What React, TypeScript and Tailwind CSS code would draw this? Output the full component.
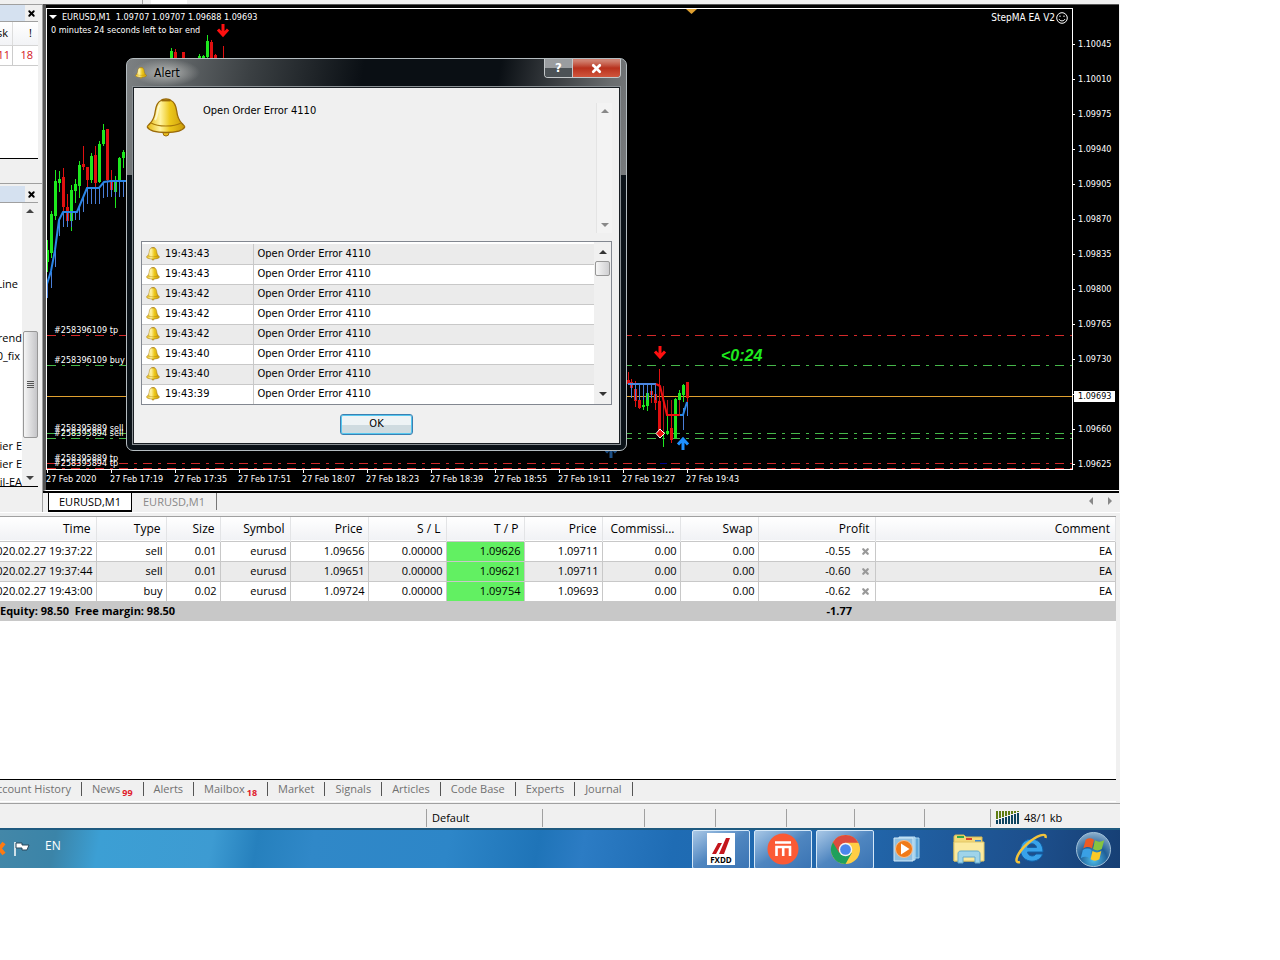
import { ReactNode } from "react";
import { X } from "lucide-react";

type Candle = {
  x: number;
  high: number;
  low: number;
  top: number;
  bottom: number;
  up?: boolean;
};

const candles: Candle[] = [
  { x: 47, high: 240, low: 272, top: 250, bottom: 262, up: true },
  { x: 51, high: 211, low: 258, top: 214, bottom: 253, up: true },
  { x: 55, high: 170, low: 220, top: 181, bottom: 216, up: true },
  { x: 59, high: 171, low: 192, top: 179, bottom: 183, up: true },
  { x: 63, high: 168, low: 212, top: 177, bottom: 207 },
  { x: 67, high: 194, low: 222, top: 207, bottom: 221 },
  { x: 71, high: 185, low: 231, top: 190, bottom: 221, up: true },
  { x: 75, high: 179, low: 203, top: 184, bottom: 191, up: true },
  { x: 79, high: 161, low: 198, top: 165, bottom: 186, up: true },
  { x: 83, high: 146, low: 170, top: 164, bottom: 167 },
  { x: 87, high: 167, low: 190, top: 167, bottom: 180 },
  { x: 91, high: 153, low: 183, top: 156, bottom: 180, up: true },
  { x: 95, high: 146, low: 187, top: 155, bottom: 183 },
  { x: 99, high: 141, low: 183, top: 144, bottom: 182, up: true },
  { x: 103, high: 124, low: 146, top: 130, bottom: 144, up: true },
  { x: 107, high: 129, low: 182, top: 129, bottom: 180 },
  { x: 111, high: 170, low: 192, top: 181, bottom: 190 },
  { x: 115, high: 176, low: 208, top: 181, bottom: 192, up: true },
  { x: 119, high: 157, low: 182, top: 158, bottom: 181, up: true },
  { x: 123, high: 150, low: 168, top: 152, bottom: 158, up: true },
  { x: 171, high: 48, low: 66, top: 51, bottom: 64, up: true },
  { x: 175, high: 49, low: 66, top: 52, bottom: 64 },
  { x: 183, high: 52, low: 66, top: 52, bottom: 64 },
  { x: 199, high: 54, low: 66, top: 56, bottom: 64, up: true },
  { x: 203, high: 55, low: 66, top: 56, bottom: 64, up: true },
  { x: 207, high: 35, low: 66, top: 41, bottom: 57, up: true },
  { x: 211, high: 40, low: 66, top: 42, bottom: 58 },
  { x: 215, high: 54, low: 66, top: 55, bottom: 64 },
  { x: 223, high: 46, low: 66, top: 60, bottom: 64 },
  { x: 628, high: 372, low: 384, top: 380, bottom: 384 },
  { x: 631, high: 379, low: 398, top: 382, bottom: 388 },
  { x: 635, high: 381, low: 407, top: 389, bottom: 401 },
  { x: 639, high: 386, low: 409, top: 400, bottom: 408 },
  { x: 643, high: 396, low: 410, top: 405, bottom: 407, up: true },
  { x: 647, high: 390, low: 411, top: 393, bottom: 406, up: true },
  { x: 651, high: 387, low: 403, top: 391, bottom: 395 },
  { x: 655, high: 393, low: 410, top: 394, bottom: 403 },
  { x: 659, high: 369, low: 432, top: 401, bottom: 431 },
  { x: 663, high: 432, low: 447, top: 432, bottom: 434, up: true },
  { x: 667, high: 415, low: 435, top: 431, bottom: 434, up: true },
  { x: 671, high: 400, low: 443, top: 428, bottom: 440 },
  { x: 675, high: 398, low: 439, top: 399, bottom: 438, up: true },
  { x: 679, high: 390, low: 402, top: 393, bottom: 400, up: true },
  { x: 683, high: 384, low: 402, top: 385, bottom: 395, up: true },
  { x: 687, high: 382, low: 404, top: 382, bottom: 398 },
];

// thin blue / red histogram bars hanging off the moving average: [x, from, to]
const blueBars = [
  [47, 283, 298], [51, 272, 288], [55, 250, 267], [59, 220, 236], [63, 212, 227],
  [67, 211, 227], [71, 211, 227], [75, 211, 220], [79, 205, 220], [83, 196, 212],
  [87, 188, 204], [91, 188, 204], [95, 188, 204], [99, 187, 204], [103, 183, 198],
  [107, 181, 197], [111, 181, 197], [115, 181, 197], [119, 181, 197], [123, 181, 197],
  [631, 384, 398], [635, 384, 400], [639, 384, 400], [643, 384, 400], [647, 384, 400],
  [651, 384, 398], [655, 384, 400], [683, 408, 430], [687, 402, 416],
];
const redBars = [
  [663, 386, 432], [667, 400, 416], [671, 400, 416], [679, 400, 416],
];

const orderLines = [
  { y: 335, color: "#d42a2a" },
  { y: 365, color: "#46b84a" },
  { y: 433, color: "#46b84a" },
  { y: 438, color: "#46b84a" },
  { y: 463, color: "#d42a2a" },
  { y: 468, color: "#d42a2a" },
];

const orderLabels = [
  { y: 333, text: "#258396109 tp" },
  { y: 363, text: "#258396109 buy" },
  { y: 431, text: "#258395889 sell" },
  { y: 436, text: "#258395894 sell" },
  { y: 461, text: "#258395889 tp" },
  { y: 466, text: "#258395894 tp" },
];

const prices = [
  "1.10045", "1.10010", "1.09975", "1.09940", "1.09905", "1.09870", "1.09835",
  "1.09800", "1.09765", "1.09730", "", "1.09660", "1.09625",
];

const times = [
  "27 Feb 2020", "27 Feb 17:19", "27 Feb 17:35", "27 Feb 17:51", "27 Feb 18:07",
  "27 Feb 18:23", "27 Feb 18:39", "27 Feb 18:55", "27 Feb 19:11", "27 Feb 19:27", "27 Feb 19:43",
];

const alerts = [
  "19:43:43", "19:43:43", "19:43:42", "19:43:42", "19:43:42", "19:43:40", "19:43:40", "19:43:39",
];

const columns = [
  { name: "Time", width: "w-[96px]" },
  { name: "Type", width: "w-[70px]" },
  { name: "Size", width: "w-[54px]" },
  { name: "Symbol", width: "w-[70px]" },
  { name: "Price", width: "w-[78px]" },
  { name: "S / L", width: "w-[78px]" },
  { name: "T / P", width: "w-[78px]" },
  { name: "Price", width: "w-[78px]" },
  { name: "Commissi...", width: "w-[78px]" },
  { name: "Swap", width: "w-[78px]" },
  { name: "Profit", width: "w-[117px]" },
  { name: "Comment", width: "" },
];

const orders = [
  ["2020.02.27 19:37:22", "sell", "0.01", "eurusd", "1.09656", "0.00000", "1.09626", "1.09711", "0.00", "0.00", "-0.55", "EA"],
  ["2020.02.27 19:37:44", "sell", "0.01", "eurusd", "1.09651", "0.00000", "1.09621", "1.09711", "0.00", "0.00", "-0.60", "EA"],
  ["2020.02.27 19:43:00", "buy", "0.02", "eurusd", "1.09724", "0.00000", "1.09754", "1.09693", "0.00", "0.00", "-0.62", "EA"],
];

const terminalTabs: { name: string; count?: number }[] = [
  { name: "News", count: 99 },
  { name: "Alerts" },
  { name: "Mailbox", count: 18 },
  { name: "Market" },
  { name: "Signals" },
  { name: "Articles" },
  { name: "Code Base" },
  { name: "Experts" },
  { name: "Journal" },
];

function Bell({ className = "" }: { className?: string }) {
  return (
    <svg viewBox="0 0 40 40" className={className} aria-hidden="true">
      <defs>
        <linearGradient id="bell" x1="0" x2="1">
          <stop offset="0" stopColor="#e8b90c" />
          <stop offset="0.35" stopColor="#fff3a0" />
          <stop offset="0.6" stopColor="#edc81c" />
          <stop offset="1" stopColor="#c99a06" />
        </linearGradient>
      </defs>
      <circle cx="20" cy="35" r="3" fill="#e9bf20" stroke="#9a6a08" />
      <path
        d="M20 1c-2 0-4 .5-5 1.500C11.500 4 10 8 9.300 13 8.600 19 7 22.500 4 25.500c-1.500 1.700-3 2.500-2.700 3.500C3 32.500 11 34.500 20 34.500S37 32.500 38.700 29c.3-1-1.200-1.800-2.700-3.500C33 22.500 31.400 19 30.700 13 30 8 28.500 4 25 2.500 24 1.500 22 1 20 1z"
        fill="url(#bell)"
        stroke="#9a6a08"
        strokeWidth="1.300"
      />
      <path d="M5 25c7 4 23 4 30 0" fill="none" stroke="#a97a0a" strokeWidth="1.200" />
      <path d="M13.500 7c-2 3-1.500 10-4.500 15" fill="none" stroke="#fffbd8" strokeWidth="2" opacity=".8" />
      <path d="M15.500 2.500h9" stroke="#9a6a08" strokeWidth="1.800" />
    </svg>
  );
}

function Triangle({ dir, className = "" }: { dir: "up" | "down" | "left" | "right"; className?: string }) {
  const points = {
    up: "4,2 8,6 0,6",
    down: "0,2 8,2 4,6",
    left: "2,4 6,0 6,8",
    right: "6,4 2,0 2,8",
  };
  return (
    <svg viewBox="0 0 8 8" className={`w-2 h-2 ${className}`} aria-hidden="true">
      <polygon points={points[dir]} fill="currentColor" />
    </svg>
  );
}

function Arrow({ x, y, up = false, color }: { x: number; y: number; up?: boolean; color: string }) {
  return (
    <path
      transform={`translate(${x} ${y}) scale(1 ${up ? -1 : 1})`}
      d="M0-6V5M-5-.5L0 5 5-.5"
      fill="none"
      stroke={color}
      strokeWidth="3"
    />
  );
}

function PanelHeader() {
  return (
    <div className="h-4 flex">
      <div className="flex-1 bg-[#d5e1f0]" />
      <button aria-label="Close panel" className="w-[13px] flex items-center justify-center">
        <X className="w-[9px] h-[9px] text-black" strokeWidth={5} />
      </button>
    </div>
  );
}

function SidePanels() {
  return (
    <aside className="w-[43px] shrink-0 flex flex-col border-t border-r border-[#a0a0a0] text-[11px] overflow-hidden">
      <div className="h-[179px] pr-1 border-b border-[#a0a0a0]">
        <PanelHeader />
        <div className="h-[138px] bg-white border-t border-[#a0a0a0] border-b border-b-black">
          <div className="h-[24px] flex items-center border-b border-[#d5d5d5] bg-gradient-to-b from-white to-[#f2f3f6]">
            <span className="w-[13px] h-full flex items-center justify-end pr-1 border-r border-[#ddd]">sk</span>
            <span className="flex-1 pr-[6px] text-right">!</span>
          </div>
          <div className="h-[20px] flex items-center border-b border-[#ccc] text-[#d4141e]">
            <span className="w-[13px] h-full flex items-center justify-end pr-[2px] border-r border-[#ccc]">11</span>
            <span className="flex-1 pr-[5px] text-right">18</span>
          </div>
        </div>
      </div>
      <div className="pt-[2px] pr-1 flex-1 flex flex-col">
        <PanelHeader />
        <div className="h-[285px] flex bg-white border-t border-[#a0a0a0] border-b border-b-black">
          <ul className="w-[22px] h-full flex flex-col items-end overflow-hidden leading-[18px] whitespace-nowrap">
            <li className="mt-[72px] pr-1">Line</li>
            <li className="mt-9">Trend</li>
            <li className="pr-[2px]">0_fix</li>
            <li className="mt-[72px]">lier E</li>
            <li>lier E</li>
            <li>il-EA</li>
          </ul>
          <div className="flex-1 flex flex-col items-center bg-[#f0f0f0] py-1">
            <Triangle dir="up" className="text-[#444]" />
            <div className="w-[15px] h-[107px] mt-[116px] flex flex-col items-center justify-center gap-px rounded-[2px] border border-[#979797] bg-gradient-to-r from-[#f5f5f5] to-[#c5c5c8]">
              <span className="w-[7px] h-px bg-[#555]" />
              <span className="w-[7px] h-px bg-[#555]" />
              <span className="w-[7px] h-px bg-[#555]" />
              <span className="w-[7px] h-px bg-[#555]" />
            </div>
            <Triangle dir="down" className="mt-auto text-[#444]" />
          </div>
        </div>
      </div>
    </aside>
  );
}

function Plot() {
  return (
    <svg className="w-full h-[460px] block" role="img" aria-label="EURUSD M1 candlestick chart">
      <g transform="translate(-47 -9)" shapeRendering="crispEdges">
        {orderLines.map((line) => (
          <line key={line.y} x1="47" x2="120%" y1={line.y + 0.5} y2={line.y + 0.5} stroke={line.color} strokeDasharray="9 6 3 6" />
        ))}
        <line x1="47" x2="120%" y1="396.5" y2="396.5" stroke="#e0a030" />
        <rect x="660" y="463" width="7" height="1" fill="#00008b" />
        {candles.map((c) => {
          const color = c.up ? "#1ee81e" : "#e01010";
          return (
            <g key={c.x} fill={color}>
              <rect x={c.x} y={c.high} width="1" height={c.low - c.high} />
              <rect x={c.x - 1} y={c.top} width="3" height={c.bottom - c.top} />
            </g>
          );
        })}
        {blueBars.map(([x, from, to]) => (
          <rect key={x} x={x} y={from} width="1" height={to - from} fill="#4a7fd8" />
        ))}
        {redBars.map(([x, from, to]) => (
          <rect key={x} x={x} y={from} width="1" height={to - from} fill="#b01818" />
        ))}
      </g>
      <g transform="translate(-47 -9)">
        <g fill="none" strokeWidth="2">
          <path d="M47 284L51 271 55 250 59 220 63 212H77L87 188H99L104 182 111 181H126" stroke="#2a86e8" />
          <path d="M628 384H656" stroke="#4a86e0" />
          <path d="M656 384L660 386 667 415H681" stroke="#f01010" />
          <path d="M680 415H683L687 402" stroke="#2a86e8" />
        </g>
        <Arrow x={223} y={30} color="#ff1010" />
        <Arrow x={660} y={352} color="#ff1010" />
        <Arrow x={683} y={444} up color="#1e90ff" />
        <Arrow x={611} y={452} up color="#1c4f86" />
        <path d="M660 429l4.500 4.500-4.500 4.500-4-4.500z" fill="#f01010" stroke="#fff" />
        <polygon points="49,15 57,15 53,19" fill="#fff" />
        <polygon points="686,9 697,9 691.500,14" fill="#e0a030" />
        <g fill="#fff" className="text-[9px]">
          <text x="62" y="20">EURUSD,M1&nbsp; 1.09707 1.09707 1.09688 1.09693</text>
          <text x="51" y="33">0 minutes 24 seconds left to bar end</text>
          {orderLabels.map((label) => (
            <text key={label.y} x="54" y={label.y}>{label.text}</text>
          ))}
        </g>
        <text x="721" y="361" fill="#1eea1e" className="font-['Liberation_Sans',sans-serif] text-[16px] font-bold italic">
          &lt;0:24
        </text>
      </g>
    </svg>
  );
}

function Chart() {
  return (
    <section className="h-[487px] flex bg-black text-white text-[9px] border-t border-l-[3px] border-[#555] border-b border-b-white font-['DejaVu_Sans_Condensed','DejaVu_Sans',sans-serif]">
      <div className="flex-1 min-w-0 pt-[3px]">
        <div className="relative border border-white">
          <Plot />
          <div className="absolute top-px right-1 flex items-center gap-px text-[10px]">
            <span>StepMA EA V2</span>
            <svg viewBox="0 0 12 12" className="w-3 h-3" fill="none" stroke="#fff" aria-hidden="true">
              <circle cx="6" cy="6" r="5.300" />
              <path d="M3 7c1 2.500 5 2.500 6 0M4 3.500v1.500M8 3.500v1.500" />
            </svg>
          </div>
        </div>
        <div className="flex pl-px">
          {times.map((time) => (
            <span key={time} className="w-16 shrink-0 whitespace-nowrap">
              <span className="block w-px h-[3px] bg-white" />
              <span className="block -ml-px leading-[12px]">{time}</span>
            </span>
          ))}
        </div>
      </div>
      <div className="relative w-[46px] shrink-0 pt-[22px]">
        {prices.map((price, i) => (
          <div key={i} className="h-[35px] flex items-center gap-[3px]">
            <span className="w-[2px] h-px bg-white" />
            <span>{price}</span>
          </div>
        ))}
        <span className="absolute left-px top-[386px] h-[11px] w-[41px] bg-white pl-1 text-black leading-[11px]">
          1.09693
        </span>
      </div>
    </section>
  );
}

function ChartTabs() {
  return (
    <nav className="h-[21px] flex items-start border-t-2 border-black bg-[#f0f0f0] pl-[5px] text-[11px]">
      <button className="w-[84px] h-[19px] border border-t-0 border-b-2 border-black bg-white leading-[17px]">
        EURUSD,M1
      </button>
      <button className="w-[85px] h-[17px] border-r border-[#777] text-[#888] leading-[17px]">EURUSD,M1</button>
      <div className="flex-1" />
      <button aria-label="Scroll tabs left" className="w-[19px] h-4 flex items-center justify-center text-[#888]">
        <Triangle dir="left" />
      </button>
      <button aria-label="Scroll tabs right" className="w-[19px] h-4 flex items-center justify-center text-[#888]">
        <Triangle dir="right" />
      </button>
    </nav>
  );
}

function Terminal() {
  return (
    <section className="mr-1 border-t border-[#a0a0a0] text-[11px]">
      <div className="h-[262px] bg-white">
        <table className="w-full table-fixed border-collapse">
          <thead>
            <tr className="h-[24px] bg-gradient-to-b from-white to-[#f1f2f5] border-b border-[#c8c8c8] text-[12px]">
              {columns.map((col, i) => (
                <th key={i} className={`${col.width} p-0 pr-[5px] text-right font-normal border-r border-[#e3e4e6] whitespace-nowrap`}>
                  {col.name}
                </th>
              ))}
            </tr>
          </thead>
          <tbody>
            {orders.map((row, i) => (
              <tr key={i} className={`h-5 ${i % 2 ? "bg-[#ebebeb]" : "bg-white"} border-b border-[#c8c8c8]`}>
                {row.map((cell, j) => (
                  <td key={j} className={`p-0 border-r border-[#c8c8c8] ${j === 6 ? "bg-[#62f062]" : ""}`}>
                    <div className="flex items-center justify-end gap-[10px] pr-[3px] leading-[18px] overflow-hidden whitespace-nowrap">
                      {cell}
                      {j === 10 && (
                        <button aria-label="Close order" className="pr-[2px]">
                          <X className="w-[9px] h-[9px] text-[#999]" strokeWidth={6} />
                        </button>
                      )}
                    </div>
                  </td>
                ))}
              </tr>
            ))}
          </tbody>
          <tfoot>
            <tr className="h-5 bg-[#c8c8c8] font-bold">
              <td colSpan={10} className="p-0 whitespace-pre">Equity: 98.50  Free margin: 98.50</td>
              <td className="p-0 pr-[23px] text-right">-1.77</td>
              <td />
            </tr>
          </tfoot>
        </table>
      </div>
      <nav className="h-[23px] pb-[3px] flex items-center border-t border-black border-b border-b-white bg-[#f0f0f0] text-[#707070]">
        <button className="w-[82px] h-[14px] flex items-center justify-end pr-[10px] border-r border-[#555] whitespace-nowrap">
          Account History
        </button>
        {terminalTabs.map((tab) => (
          <button key={tab.name} className="h-[14px] flex items-center px-[10px] border-r border-[#555] whitespace-nowrap">
            {tab.name}
            {tab.count && <span className="pl-[2px] pt-[8px] text-[9px] font-bold text-[#e0202c]">{tab.count}</span>}
          </button>
        ))}
      </nav>
    </section>
  );
}

function StatusBar() {
  return (
    <footer className="h-[25px] mt-px pt-[3px] flex items-center border-t border-[#a0a0a0] bg-[#f0f0f0] text-[11px] leading-[18px]">
      <div className="w-[427px] h-[18px] border-r border-[#a0a0a0]" />
      <div className="w-[116px] h-[18px] pl-[5px] border-r border-[#a0a0a0]">Default</div>
      <div className="w-[102px] h-[18px] border-r border-[#a0a0a0]" />
      <div className="w-[71px] h-[18px] border-r border-[#a0a0a0]" />
      <div className="w-[71px] h-[18px] border-r border-[#a0a0a0]" />
      <div className="w-[68px] h-[18px] border-r border-[#a0a0a0]" />
      <div className="w-[70px] h-[18px] border-r border-[#a0a0a0]" />
      <div className="w-[66px] h-[18px] border-r border-[#a0a0a0]" />
      <div className="flex items-center gap-1 pl-[5px]">
        <svg viewBox="0 0 24 13" className="w-6 h-[13px]" aria-hidden="true">
          {[0, 1, 2, 3, 4, 5, 6, 7].map((i) => (
            <g key={i}>
              <rect x={i * 3} y="0" width="2" height={8 - i} fill="#5f7d12" />
              <rect x={i * 3} y={9 - i} width="2" height={4 + i} fill="#0d4460" />
            </g>
          ))}
        </svg>
        <span>48/1 kb</span>
      </div>
    </footer>
  );
}

function TaskButton({ label, open = false, children }: { label: string; open?: boolean; children: ReactNode }) {
  return (
    <button
      aria-label={label}
      className={`w-[58px] h-[39px] flex items-center justify-center ${
        open
          ? "rounded-[2px] border border-[#d5e8f8] bg-gradient-to-br from-[#a9c8e6] via-[#4f86c0] to-[#3a74b4]"
          : ""
      }`}
    >
      {children}
    </button>
  );
}

function Taskbar() {
  return (
    <div className="h-10 flex items-center border-t-2 border-[#1f5a80] bg-[linear-gradient(100deg,#4387a8_0%,#3b84a8_5%,#3c9fd4_9%,#3d9bd2_19%,#2680bd_23%,#3088c8_28%,#2d86c8_40%,#1f74b8_48%,#2c7cc4_52%,#1f6cb4_60%,#2164a8_78%,#1d4f8c_92%,#163f74_100%)] overflow-hidden">
      <div className="flex items-center text-white text-[12px]">
        <svg viewBox="0 0 32 20" className="w-8 h-5" aria-hidden="true">
          <path d="M-5 4L4 15M4 4L-5 15" stroke="#ff7a10" strokeWidth="4" />
          <path d="M15 3v14" stroke="#fff" strokeWidth="1.500" />
          <path d="M16 4h6v2h7l-2 5h-5V9h-6z" fill="#fff" stroke="#29485c" />
        </svg>
        <button className="pl-[13px] pb-[6px]">EN</button>
      </div>
      <div className="ml-auto -mr-[2px] flex gap-1">
        <TaskButton label="FXDD" open>
          <span className="w-7 h-8 flex flex-col items-center justify-end bg-white">
            <svg viewBox="0 0 20 18" className="w-5 h-[18px]" aria-hidden="true">
              <path d="M1 17L7 6h4L5 17zM8 17L15 1h4l-6 16z" fill="#c4161c" />
            </svg>
            <span className="text-[8px] font-bold leading-[10px] text-black">FXDD</span>
          </span>
        </TaskButton>
        <TaskButton label="Messages" open>
          <svg viewBox="0 0 32 32" className="w-8 h-8" aria-hidden="true">
            <circle cx="16" cy="16" r="15.500" fill="#fb5a35" />
            <path d="M8 9.500h16M9.500 23v-9h13.500v9M16.200 14v9" fill="none" stroke="#fff" strokeWidth="2.600" />
          </svg>
        </TaskButton>
        <TaskButton label="Chrome" open>
          <svg viewBox="0 0 32 32" className="w-[31px] h-[31px]" aria-hidden="true">
            <circle cx="16" cy="16" r="15" fill="#ffce44" />
            <path d="M16 16L3 8.500A15 15 0 0 0 16 31l6.500-11.500z" fill="#1fa05c" />
            <path d="M16 9h13.300A15 15 0 0 0 3 8.500l6.500 11z" fill="#dd4b3e" />
            <circle cx="16" cy="16" r="7" fill="#f4f4f4" />
            <circle cx="16" cy="16" r="5.500" fill="#4a86ec" />
          </svg>
        </TaskButton>
        <TaskButton label="Media Player">
          <svg viewBox="0 0 28 28" className="w-7 h-7" aria-hidden="true">
            <path d="M10 3h16v20H10z" fill="#5fa7d8" stroke="#a6d3ee" />
            <path d="M6 2h16v23H6z" fill="#8cc4e8" stroke="#c2e2f4" />
            <path d="M1 3h19v23H1z" fill="#8fbfe0" stroke="#d5ebf8" />
            <circle cx="11" cy="14" r="8.500" fill="#f07a18" stroke="#f8c090" />
            <polygon points="8,8.500 16.500,14 8,19.500" fill="#fff" />
          </svg>
        </TaskButton>
        <TaskButton label="Explorer">
          <svg viewBox="0 0 32 30" className="w-8 h-[30px]" aria-hidden="true">
            <path d="M1 3c0-1 .5-2 1.500-2H11l2 2h16v24H1z" fill="#f3d878" stroke="#d8b850" />
            <path d="M4 2h7v2H4z" fill="#2fa84a" />
            <path d="M13 4h6v2h-6z" fill="#d8402c" />
            <path d="M22 6h6v2h-6z" fill="#3c88d0" />
            <path d="M1 8h30v19H1z" fill="#fbeaa0" stroke="#e2c766" />
            <path d="M5 29V20c0-2 1-3 3-3h16c2 0 3 1 3 3v9h-5v-6H10v6z" fill="#9fd4ea" stroke="#64aacb" />
          </svg>
        </TaskButton>
        <TaskButton label="Internet Explorer">
          <svg viewBox="0 0 34 32" className="w-[34px] h-8" aria-hidden="true">
            <path
              d="M29 19H13.500c.5 4 6 5.500 8.500 2H28.500C26 31 8 31 6.500 18 5.500 3 29 1 29 19zM13.500 14.500h9c-.5-5-8.500-5-9 0z"
              fill="#38a2ea"
              fillRule="evenodd"
              stroke="#1261a8"
            />
            <path d="M6 29C-1 31 3 20 13 11 23 2 33-1 31.500 5" fill="none" stroke="#f3c33c" strokeWidth="2.500" />
          </svg>
        </TaskButton>
        <TaskButton label="Start">
          <svg viewBox="0 0 38 38" className="w-[37px] h-[37px]" aria-hidden="true">
            <defs>
              <radialGradient id="orb" cx=".5" cy=".8" r=".8">
                <stop offset="0" stopColor="#4fc0ec" />
                <stop offset=".5" stopColor="#1f5f98" />
                <stop offset="1" stopColor="#8fb0cc" />
              </radialGradient>
            </defs>
            <circle cx="19" cy="19" r="17.500" fill="url(#orb)" stroke="#9fbfd8" />
            <path d="M11 9c3-2 5.500-2 8.500 0l-2 9c-3-2-5.500-2-9 0z" fill="#ee5a24" />
            <path d="M20.500 9.500c3 2 6 2 9.500 0l-2.500 9c-3 2-6 2-9 0z" fill="#86c440" />
            <path d="M8 19.500c3-2 6-2 9 0l-2 8.500c-3-2-6-2-9 0z" fill="#3aa0e4" />
            <path d="M18 20.500c3 2 6 2 9 0l-2 8.500c-3 2-6 2-9 0z" fill="#fcc928" />
          </svg>
        </TaskButton>
      </div>
    </div>
  );
}

function AlertDialog() {
  return (
    <div
      role="dialog"
      aria-labelledby="alert-title"
      className="absolute left-[126px] top-[58px] w-[501px] px-[5px] pb-[5px] rounded-[7px] border border-[#b4bcc0] bg-[linear-gradient(to_bottom,transparent_0,transparent_116px,#0b1218_116px),linear-gradient(100deg,#7d8183_0%,#3b4043_22%,#0a0f14_42%,#0a0f14_66%,#6a6d6f_86%,#8d9092_100%)] font-['DejaVu_Sans_Condensed','DejaVu_Sans',sans-serif] text-[11px] text-black"
    >
      <div className="h-[27px] flex items-start">
        <div className="h-full flex items-center gap-[7px] pl-[3px] pr-5 bg-[radial-gradient(closest-side,#b4b6b4,transparent)]">
          <Bell className="w-3 h-3" />
          <h2 id="alert-title" className="text-[12px]">Alert</h2>
        </div>
        <div className="ml-auto flex h-[19px] rounded-b-[4px] border border-t-0 border-[#c4c8ca] overflow-hidden font-bold text-white text-[13px]">
          <button aria-label="Help" className="w-7 border-r border-[#c4c8ca] bg-gradient-to-b from-[#9a9da0] from-50% to-[#4c5256] to-50% leading-[18px]">
            ?
          </button>
          <button aria-label="Close" className="w-[47px] flex items-center justify-center bg-gradient-to-b from-[#d08070] from-10% via-[#b8301c] via-50% to-[#d0553c]">
            <X className="w-[13px] h-[13px]" strokeWidth={5} />
          </button>
        </div>
      </div>
      <div className="border border-[#8a9094] outline outline-[#1a1f24] outline-offset-[-2px] bg-[#f0f0f0] px-2 pt-[11px] pb-[9px]">
        <div className="flex items-start pl-[5px]">
          <Bell className="w-10 h-10 shrink-0" />
          <textarea
            readOnly
            aria-label="Alert message"
            defaultValue="Open Order Error 4110"
            className="flex-1 h-[130px] ml-[17px] mt-[6px] resize-none overflow-hidden bg-transparent leading-[14px] outline-none"
          />
          <div className="w-4 h-[130px] mt-[5px] flex flex-col items-center justify-between border-l border-[#e4e4e4] bg-[#f3f3f3] py-1 text-[#888]">
            <Triangle dir="up" />
            <Triangle dir="down" />
          </div>
        </div>
        <div className="mt-[7px] flex border border-[#828790] bg-white">
          <div className="flex-1 pt-[2px]">
            <table className="w-full border-collapse">
              <tbody>
                {alerts.map((time, i) => (
                  <tr key={i} className={`h-5 ${i % 2 ? "bg-white" : "bg-[#ebebeb]"} ${i < 7 ? "border-b border-[#c8c8c8]" : ""}`}>
                    <td className="w-[111px] p-0 border-r border-[#c8c8c8]">
                      <div className="flex items-center gap-[5px] pl-1">
                        <Bell className="w-[14px] h-[14px]" />
                        {time}
                      </div>
                    </td>
                    <td className="p-0 pl-1">Open Order Error 4110</td>
                  </tr>
                ))}
              </tbody>
            </table>
          </div>
          <div className="w-[17px] flex flex-col items-center bg-[#f0f0f0] py-[6px]">
            <Triangle dir="up" className="text-[#333]" />
            <div className="mt-[5px] w-[15px] h-[15px] rounded-[2px] border border-[#979797] bg-gradient-to-r from-[#f6f6f6] to-[#cfcfd1]" />
            <Triangle dir="down" className="mt-auto text-[#333]" />
          </div>
        </div>
        <div className="mt-[9px] flex justify-center">
          <button className="w-[73px] h-[21px] rounded-[3px] border border-[#3c7fb1] bg-gradient-to-b from-[#eef3f5] from-50% to-[#cfdbe0] to-50% ring-1 ring-inset ring-[#55c8f0]">
            OK
          </button>
        </div>
      </div>
    </div>
  );
}

export default function App() {
  return (
    <div className="min-h-screen bg-white pr-40">
      <main className="relative overflow-hidden bg-[#f0f0f0] font-['Open_Sans','Noto_Sans',sans-serif] text-black">
        <div className="h-1 flex">
          <div className="w-[143px] border-r border-[#a0a0a0]" />
          <div className="w-9 ml-2 bg-white" />
        </div>
        <div className="flex">
          <SidePanels />
          <div className="flex-1 min-w-0 pr-px">
            <Chart />
            <ChartTabs />
          </div>
        </div>
        <div className="h-1 border-t border-white" />
        <Terminal />
        <StatusBar />
        <Taskbar />
        <AlertDialog />
      </main>
    </div>
  );
}
